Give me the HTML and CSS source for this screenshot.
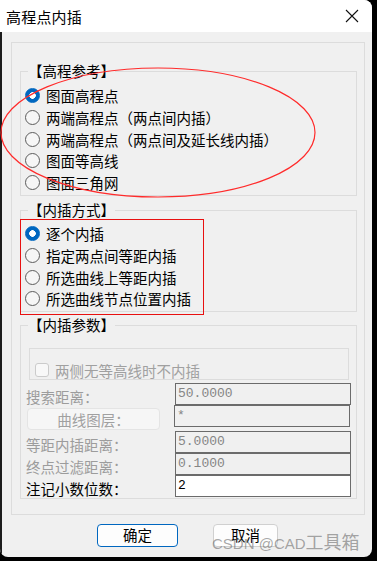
FILE: index.html
```html
<!DOCTYPE html>
<html>
<head>
<meta charset="utf-8">
<link rel="stylesheet" href="styles.css">
</head>
<body>
<div class="window">
  <div class="titlebar">
    <span class="title">高程点内插</span>
    <svg class="close" viewBox="0 0 14 14" width="14" height="14"><path d="M1 1 L13 13 M13 1 L1 13" stroke="#111" stroke-width="1.1" fill="none"/></svg>
  </div>
  <div class="client">
    <div class="outer">
      <fieldset class="group g1">
        <legend>【高程参考】</legend>
        <div class="items">
          <div class="radio checked"><span class="dot"></span>图面高程点</div>
          <div class="radio"><span class="dot"></span>两端高程点（两点间内插）</div>
          <div class="radio"><span class="dot"></span>两端高程点（两点间及延长线内插）</div>
          <div class="radio"><span class="dot"></span>图面等高线</div>
          <div class="radio"><span class="dot"></span>图面三角网</div>
        </div>
      </fieldset>
      <fieldset class="group g2">
        <legend>【内插方式】</legend>
        <div class="items">
          <div class="radio checked"><span class="dot"></span>逐个内插</div>
          <div class="radio"><span class="dot"></span>指定两点间等距内插</div>
          <div class="radio"><span class="dot"></span>所选曲线上等距内插</div>
          <div class="radio"><span class="dot"></span>所选曲线节点位置内插</div>
        </div>
      </fieldset>
      <fieldset class="group g3">
        <legend>【内插参数】</legend>
        <div class="frame">
          <div class="check"><span class="box"></span>两侧无等高线时不内插</div>
        </div>
        <div class="row">
          <span class="lbl disabled">搜索距离：</span>
          <span class="input disabled">50.0000</span>
        </div>
        <div class="row row-btn">
          <span class="btn-lbl">曲线图层：</span>
          <span class="input disabled shift">*</span>
        </div>
        <div class="row">
          <span class="lbl disabled">等距内插距离：</span>
          <span class="input disabled">5.0000</span>
        </div>
        <div class="row">
          <span class="lbl disabled">终点过滤距离：</span>
          <span class="input disabled">0.1000</span>
        </div>
        <div class="row">
          <span class="lbl">注记小数位数：</span>
          <span class="input active">2</span>
        </div>
      </fieldset>
    </div>
    <div class="buttons">
      <button class="btn primary">确定</button>
      <button class="btn cancel">取消</button>
    </div>
  </div>
  <svg class="annot" width="372" height="557" viewBox="0 0 372 557">
    <ellipse cx="158" cy="132.5" rx="157" ry="64.5" fill="none" stroke="#ff2b2b" stroke-width="1.2"/>
    <rect x="20.5" y="219.5" width="183" height="95" fill="none" stroke="#e81010" stroke-width="1"/>
  </svg>
  <div class="watermark">CSDN @CAD<span class="wm-cjk">工具箱</span></div>
</div>
</body>
</html>
```
FILE: styles.css
```css
html, body {
  margin: 0;
  padding: 0;
}
body {
  background: #000;
  width: 377px;
  height: 561px;
  overflow: hidden;
  font-family: "Noto Sans CJK SC", "Noto Sans", sans-serif;
  color: #000;
}
.window {
  position: relative;
  width: 372px;
  height: 557px;
  background: #f0f0f0;
  border-radius: 0 8px 8px 8px;
  overflow: hidden;
}
.titlebar {
  height: 32px;
  background: #fff;
  display: flex;
  align-items: center;
  justify-content: space-between;
  padding: 0 13px 0 6px;
  box-sizing: border-box;
}
.title {
  font-size: 15px;
  line-height: 1;
  letter-spacing: 0.2px;
}
.close {
  display: block;
  width: 14px;
  height: 14px;
}
.client {
  height: 525px;
  box-sizing: border-box;
  border-left: 2px solid #1c1c1c;
  padding-top: 10px;
}
.outer {
  margin-left: 9px;
  width: 354px;
  height: 473px;
  box-sizing: border-box;
  border: 1px solid #dcdcdc;
  padding: 18px 7px 0 8px;
}
.group {
  margin: 0;
  padding: 0;
  min-width: 0;
  border: 1px solid #dcdcdc;
  box-sizing: border-box;
}
.group legend {
  padding: 0;
  margin-left: 7px;
  height: 20px;
  line-height: 20px;
  font-size: 14.5px;
}
.g1 {
  height: 135px;
}
.g2 {
  height: 112px;
  margin-top: 4px;
}
.g3 {
  height: 184px;
  margin-top: 3px;
}
.g1 .items {
  padding: 4px 0 0 4px;
}
.g2 .items {
  padding: 3px 0 0 4px;
}
.radio {
  display: flex;
  align-items: center;
  height: 21.7px;
  font-size: 14.5px;
  white-space: nowrap;
}
.dot {
  width: 15px;
  height: 15px;
  border-radius: 50%;
  border: 1px solid #5c5c5c;
  box-sizing: border-box;
  background: #f6f6f6;
  margin-right: 6px;
  flex: none;
}
.checked .dot {
  border-color: #0067c0;
  background: radial-gradient(circle, #fff 0 3px, #0067c0 3.6px);
}
.frame {
  margin: 13px 7px 0 8px;
  height: 32px;
  box-sizing: border-box;
  border: 1px solid #dcdcdc;
  padding: 13px 0 0 5px;
}
.check {
  display: flex;
  align-items: center;
  height: 16px;
  font-size: 14.5px;
  color: #a0a0a0;
}
.box {
  width: 14px;
  height: 14px;
  box-sizing: border-box;
  border: 1px solid #cbcbcb;
  border-radius: 3px;
  background: #f8f8f8;
  margin-right: 6px;
}
.frame + .row {
  margin-top: 3px;
}
.row {
  display: flex;
  height: 22px;
  padding-left: 5px;
}
.row-btn {
  height: 26px;
}
.lbl {
  width: 149px;
  align-self: flex-end;
  line-height: 16px;
  font-size: 14.5px;
  white-space: nowrap;
}
.disabled {
  color: #9c9c9c;
}
.btn-lbl {
  width: 133px;
  height: 22px;
  margin-left: 1px;
  margin-right: 14px;
  align-self: flex-end;
  margin-bottom: 1px;
  box-sizing: border-box;
  border: 1px solid #e4e4e4;
  border-radius: 4px;
  background: #f6f6f6;
  color: #a0a0a0;
  font-size: 14.5px;
  display: flex;
  align-items: center;
  justify-content: center;
}
.input {
  width: 176px;
  height: 22px;
  box-sizing: border-box;
  border: 1px solid #6b6b6b;
  font-family: "Liberation Mono", monospace;
  font-size: 13px;
  line-height: 20px;
  padding-left: 2px;
  background: #f0f0f0;
  color: #858585;
}
.input.active {
  background: #fff;
  color: #000;
}
.buttons {
  display: flex;
  margin-top: 9px;
  padding-left: 95px;
  gap: 35px;
}
.btn {
  height: 23px;
  box-sizing: border-box;
  border-radius: 4px;
  background: #fdfdfd;
  font-family: "Noto Sans CJK SC", sans-serif;
  font-size: 14.5px;
  line-height: 1;
  padding: 0;
  color: #000;
}
.primary {
  width: 81px;
  border: 1px solid #0067c0;
}
.cancel {
  width: 65px;
  border: 1px solid #d0d0d0;
}
.annot {
  position: absolute;
  left: 0;
  top: 0;
  pointer-events: none;
}
.watermark {
  position: absolute;
  left: 212px;
  top: 529px;
  font-family: "Liberation Sans", "Noto Sans CJK SC", sans-serif;
  font-size: 15px;
  line-height: 24px;
  color: rgba(95, 95, 95, 0.55);
  white-space: nowrap;
}
.wm-cjk {
  font-family: "Noto Sans CJK SC", sans-serif;
  font-size: 18px;
}
```
